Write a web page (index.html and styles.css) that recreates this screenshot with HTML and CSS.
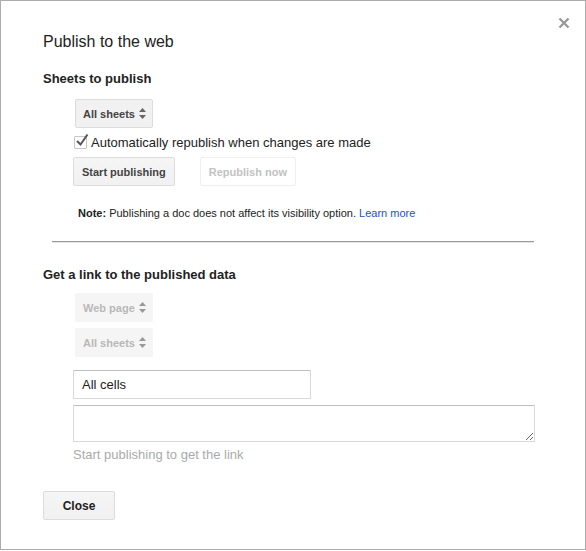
FILE: index.html
```html
<!DOCTYPE html>
<html lang="en">

<head>
    <meta charset="UTF-8">
    <meta name="viewport" content="width=device-width, initial-scale=1.0">
    <title>Publish to the web</title>
    <link rel="stylesheet" href="styles.css">
</head>

<body>
    <div class="dialog">

        <!-- close icon, top right -->
        <span class="close-x" title="Close">
            <svg width="12" height="12" viewBox="0 0 12 12">
                <path d="M1.5 1.5 L10.5 10.5 M10.5 1.5 L1.5 10.5" stroke="#9a9a9a" stroke-width="2.4" />
            </svg>
        </span>

        <h1 class="title">Publish to the web</h1>

        <h2 class="sub">Sheets to publish</h2>
        <div class="indent">
            <div class="select">
                All sheets
                <svg class="arrows" width="7" height="11" viewBox="0 0 7 11">
                    <path d="M3.5 0 L7 4 L0 4 Z M0 7 L7 7 L3.5 11 Z" fill="#666" />
                </svg>
            </div>

            <label class="check">
                <span class="box">
                    <svg width="16" height="16" viewBox="0 0 16 16">
                        <path d="M3 8 L6.5 11.5 L13.5 1.5" stroke="#555" stroke-width="2" fill="none" />
                    </svg>
                </span>
                Automatically republish when changes are made
            </label>

            <div class="buttons">
                <button class="btn">Start publishing</button>
                <button class="btn" disabled>Republish now</button>
            </div>

            <p class="note"><b>Note:</b> Publishing a doc does not affect its visibility option. <a href="#">Learn more</a></p>
        </div>

        <div class="rule"></div>

        <h2 class="sub link-title">Get a link to the published data</h2>
        <div class="indent">
            <div class="select off">
                Web page
                <svg class="arrows" width="7" height="11" viewBox="0 0 7 11">
                    <path d="M3.5 0 L7 4 L0 4 Z M0 7 L7 7 L3.5 11 Z" fill="#999" />
                </svg>
            </div>
            <div class="select off">
                All sheets
                <svg class="arrows" width="7" height="11" viewBox="0 0 7 11">
                    <path d="M3.5 0 L7 4 L0 4 Z M0 7 L7 7 L3.5 11 Z" fill="#999" />
                </svg>
            </div>

            <input class="range" type="text" value="All cells">
            <textarea class="url"></textarea>
            <p class="hint">Start publishing to get the link</p>
        </div>

        <button class="btn close-btn">Close</button>
    </div>
</body>

</html>
```

FILE: styles.css
```css
body {
    margin: 0;
    background: #fff;
    font-family: "Liberation Sans", Arial, sans-serif;
    color: #222;
}

.dialog {
    box-sizing: border-box;
    width: 586px;
    height: 550px;
    border: 1px solid #acacac;
    padding: 31px 42px 0 42px;
    position: relative;
}

.close-x {
    position: absolute;
    top: 16px;
    right: 15px;
    width: 12px;
    height: 12px;
}

.close-x svg {
    display: block;
}

.title {
    margin: 0;
    font-size: 16px;
    line-height: 20px;
    font-weight: normal;
    color: #222;
}

.sub {
    margin: 19px 0 0 0;
    font-size: 13px;
    line-height: 16px;
    font-weight: bold;
    color: #222;
}

.link-title {
    margin-top: 24px;
}

.indent {
    padding-left: 30px;
}

/* select-like boxes */
.select {
    box-sizing: border-box;
    width: 78px;
    height: 29px;
    margin: 12px 0 0 2px;
    padding: 0 6px 0 7px;
    display: flex;
    align-items: center;
    justify-content: space-between;
    background: #f1f1f1;
    border: 1px solid #dcdcdc;
    border-radius: 2px;
    font-size: 11px;
    font-weight: bold;
    color: #444;
}

.select.off {
    margin-top: 6px;
    background: #f5f5f5;
    border-color: #f5f5f5;
    color: #b8b8b8;
}

.select.off:first-child {
    margin-top: 10px;
}

.check {
    display: flex;
    align-items: center;
    height: 16px;
    margin-top: 6px;
    margin-left: 1px;
    font-size: 13px;
    color: #222;
}

.box {
    box-sizing: border-box;
    width: 13px;
    height: 13px;
    border: 1px solid #c6c6c6;
    border-radius: 1px;
    margin-right: 4px;
    position: relative;
    background: #fff;
}

.box svg {
    position: absolute;
    left: -1px;
    top: -4px;
}

.buttons {
    display: flex;
    gap: 25px;
    margin-top: 7px;
}

.btn {
    box-sizing: border-box;
    height: 29px;
    padding: 0 8px;
    background: linear-gradient(#f5f5f5, #f1f1f1);
    border: 1px solid #dcdcdc;
    border-radius: 2px;
    font-family: "Liberation Sans", Arial, sans-serif;
    font-size: 11px;
    font-weight: bold;
    color: #444;
}

.btn:disabled {
    background: #fff;
    border-color: #efefef;
    color: #c2c2c2;
}

.note {
    margin: 20px 0 0 5px;
    font-size: 11px;
    line-height: 14px;
    color: #222;
}

.note a {
    color: #15c;
    text-decoration: none;
}

.rule {
    margin: 21px 9px 0 9px;
    height: 1px;
    background: #9a9a9a;
    border-bottom: 1px solid #e4e4e4;
}

.range {
    display: block;
    box-sizing: border-box;
    width: 238px;
    height: 29px;
    margin-top: 13px;
    padding: 0 8px;
    border: 1px solid #d9d9d9;
    border-top-color: #c0c0c0;
    border-radius: 1px;
    font-family: "Liberation Sans", Arial, sans-serif;
    font-size: 13px;
    color: #222;
}

.url {
    display: block;
    box-sizing: border-box;
    width: 462px;
    height: 37px;
    margin-top: 6px;
    border: 1px solid #d9d9d9;
    border-top-color: #c0c0c0;
    border-radius: 1px;
}

.hint {
    margin: 5px 0 0 0;
    font-size: 13px;
    line-height: 16px;
    color: #aaa;
}

.close-btn {
    display: block;
    width: 72px;
    margin-top: 28px;
    font-size: 12px;
    color: #222;
}
```
